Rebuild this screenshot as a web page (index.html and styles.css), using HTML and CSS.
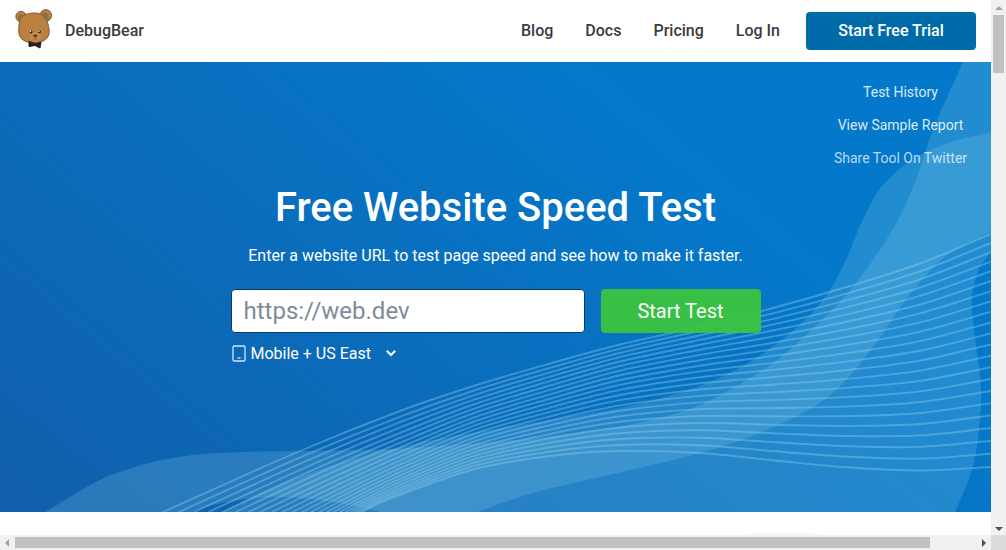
FILE: index.html
```html
<!DOCTYPE html>
<html lang="en">
<head>
<meta charset="utf-8">
<title>Free Website Speed Test</title>
<link rel="stylesheet" href="styles.css">
</head>
<body>
<div class="window">
  <div class="page">
    <header class="header">
      <a class="brand">
        <svg class="logo" viewBox="0 0 42 44" width="42" height="44">
          <g stroke="#70492a" stroke-width=".8" fill="#b98040">
            <circle cx="7" cy="8.500" r="5.200"/>
            <ellipse cx="31.800" cy="7.500" rx="5.800" ry="5.900"/>
            <path d="M7.500 9C11 5.800 16 5 20 5C25 4.900 29.500 6 31.500 10C34 14 35.200 20 35.300 24.500C35 31 28 35 20.500 35C12 35 5.500 31.500 4.800 25C4.500 19 4.800 13 7.500 9Z"/>
          </g>
          <path d="M7 11.500Q9 8 13 6.800L27 6.500Q30 8 32.500 12.500L26 18L10 19Z" fill="#b98040"/>
          <ellipse cx="6.500" cy="9" rx="2.100" ry="3" fill="#8f6d45" transform="rotate(25 6.500 9)"/>
          <ellipse cx="31.600" cy="8.300" rx="2.600" ry="3.900" fill="#8f6d45" transform="rotate(-30 31.600 8.300)"/>
          <ellipse cx="21.300" cy="28.800" rx="5.600" ry="4.200" fill="#c98f52"/>
          <circle cx="17" cy="24" r="1.500" fill="#33231b"/><circle cx="25.500" cy="23.700" r="1.500" fill="#33231b"/>
          <circle cx="16.500" cy="23.500" r=".7" fill="#fff"/><circle cx="25" cy="23.200" r=".7" fill="#fff"/>
          <path d="M18.800 27Q21.300 25.800 23.800 27Q23 29.200 21.300 29.200Q19.600 29.200 18.800 27Z" fill="#5d3a27"/>
          <path d="M21.300 29V30.500M18.500 30.800Q20 31.800 21.300 30.500Q22.600 31.800 24 30.800" fill="none" stroke="#83532b" stroke-width=".7"/>
          <path d="M15 33.500L21 35.600L27 34.200L26 40L21 37.500L15 38.500Z" fill="#251d24" stroke="#251d24" stroke-linejoin="round"/>
          <circle cx="17" cy="35.800" r=".5" fill="#8a3140"/><circle cx="24.800" cy="37" r=".5" fill="#8a3140"/>
        </svg>
        <span>DebugBear</span>
      </a>
      <nav class="nav">
        <a>Blog</a><a>Docs</a><a>Pricing</a><a>Log In</a>
        <a class="trial">Start Free Trial</a>
      </nav>
    </header>

    <main class="hero">
      <svg class="waves" viewBox="0 62 991 450" width="991" height="450">
        <g id="wave-fills"></g>
        <g id="wave-lines"></g>
      </svg>
      <div class="side-links">
        <a>Test History</a><a>View Sample Report</a><a class="dim">Share Tool On Twitter</a>
      </div>
      <section class="test">
        <h1>Free Website Speed Test</h1>
        <p>Enter a website URL to test page speed and see how to make it faster.</p>
        <div class="form">
          <input class="url" type="text" placeholder="https://web.dev">
          <button class="start">Start Test</button>
        </div>
        <div class="device">
          <svg width="14" height="17" viewBox="0 0 14 17" fill="none" stroke="#d5e6f4"><rect x="1" y="1" width="12" height="15" rx="1.200" stroke-width="1.300"/><path d="M5.500 13H8.500" stroke-width="1.300"/></svg>
          <span>Mobile + US East</span>
          <svg class="chevron" width="12" height="8" viewBox="0 0 12 8" fill="none" stroke="#fff" stroke-width="2"><path d="M1.800 1.800L6 6L10.200 1.800"/></svg>
        </div>
      </section>
    </main>
    <div class="below"><div class="blob"></div></div>
  </div>
  <div class="vbar"><i class="up"></i><div class="vthumb"></div><i class="down"></i></div>
  <div class="hbar"><i class="left"></i><div class="hthumb"></div><i class="right"></i></div>
  <div class="corner"></div>
</div>
<script src="waves.js"></script>
</body>
</html>
```
FILE: styles.css
```css
* { box-sizing: border-box; }
body { margin: 0; font-family: Roboto, "Liberation Sans", sans-serif; font-size: 16px; overflow: hidden; }
.window { display: grid; grid-template-columns: 991px 15px; grid-template-rows: 535px 15px; width: 1006px; height: 550px; }
.page { display: flex; flex-direction: column; overflow: hidden; background: #fff; }

.header { display: flex; justify-content: space-between; align-items: center; flex: none; height: 62px; padding: 0 15px 0 14px; color: #3b3b3b; font-weight: 500; }
.brand { display: flex; align-items: center; gap: 9px; }
.brand span, .nav a:not(.trial) { padding-bottom: 2px; }
.logo { display: block; margin-bottom: 2px; }
.nav { display: flex; align-items: center; gap: 32px; }
.trial { width: 170px; height: 38px; margin-left: -6px; border-radius: 4px; background: #006ba9; color: #fff; line-height: 38px; text-align: center; }

.hero { position: relative; flex: none; height: 450px; background: linear-gradient(40deg, #115fab 0%, #0479cb 74%, #0479cb 100%); color: #fff; }
.waves { position: absolute; left: 0; top: 0; }
#wave-fills path { fill: rgba(142, 208, 232, .22); }
#wave-lines path { fill: none; stroke: rgba(155, 215, 238, .36); stroke-width: 1.9; }
.side-links { position: absolute; right: 0; top: 14px; display: flex; flex-direction: column; align-items: center; width: 181px; font-size: 14px; line-height: 33px; color: rgba(255, 255, 255, .86); }
.side-links .dim { opacity: .85; }
.test { position: relative; width: 530px; margin: 0 0 0 231px; padding-top: 122px; }
h1 { margin: 0; font-size: 40px; font-weight: 500; line-height: 48px; text-align: center; white-space: nowrap; transform: translateX(-.5px); }
.test p { margin: 12px 0 0; line-height: 24px; text-align: center; transform: translateX(-.5px); }
.form { display: flex; gap: 16px; margin-top: 21px; }
.url { width: 354px; height: 44px; padding: 0 11.500px; border: 1px solid #063d68; border-radius: 4px; background: #fff; font: 24px Roboto, sans-serif; }
.url::placeholder { color: #7e8b98; opacity: 1; }
.start { width: 160px; height: 44px; padding: 0 7px 0 6px; border: 0; border-radius: 4px; background: rgba(60, 197, 60, .93); color: #fff; font: 20px Roboto, sans-serif; }
.device { display: flex; align-items: center; height: 24px; margin-top: 8px; padding-left: 1px; gap: 4.500px; }
.chevron { margin-left: 9px; }

.below { flex: 1; display: flex; align-items: flex-end; overflow: hidden; }
.blob { width: 74px; height: 3px; margin-left: 746px; border-radius: 50% 50% 0 0 / 100% 100% 0 0; background: #f5f8fc; }

.vbar, .hbar { display: flex; align-items: center; justify-content: space-between; background: #f1f1f1; }
.vbar { flex-direction: column; }
.vthumb { width: 11px; height: 58px; background: #c1c1c1; margin: 5px 0 auto; }
.hthumb { width: 915px; height: 11px; background: #c1c1c1; margin: 0 auto 0 5px; }
.vbar i, .hbar i { width: 0; height: 0; border: 4px solid transparent; }
.vbar .up { margin-top: 2px; border-bottom-color: #a3a3a3; }
.vbar .down { margin-bottom: 2px; border-top-color: #505050; }
.vbar .down { border-bottom-width: 2px; }
.hbar .left { margin-left: 1px; margin-right: 1px; border-right-color: #a3a3a3; }
.hbar .right { margin-right: 1px; border-left-color: #505050; }
.corner { background: #dcdcdc; }
```
FILE: waves.js
```javascript
// Smooth curve through a list of points (Catmull-Rom as cubic segments).
function curve(pts) {
  let d = '';
  for (let i = 0; i < pts.length - 1; i++) {
    const a = pts[Math.max(i - 1, 0)], b = pts[i], c = pts[i + 1], e = pts[Math.min(i + 2, pts.length - 1)];
    const len = (p, q) => Math.hypot(q[0] - p[0], q[1] - p[1]);
    const l = len(b, c), l0 = len(a, b) + l, l1 = l + len(c, e);
    const k0 = l / l0 / 3, k1 = l / l1 / 3;
    const c1 = [b[0] + (c[0] - a[0]) * k0, b[1] + (c[1] - a[1]) * k0];
    const c2 = [c[0] - (e[0] - b[0]) * k1, c[1] - (e[1] - b[1]) * k1];
    d += 'C' + [...c1, ...c2, ...c].map(n => n.toFixed(2)).join(' ');
  }
  return d;
}
function add(id, d) {
  const p = document.createElementNS('http://www.w3.org/2000/svg', 'path');
  p.setAttribute('d', d);
  document.getElementById(id).appendChild(p);
}

const outerTop = [[45, 512], [100, 480], [133, 467.5], [167, 459], [200, 454.5], [250, 451.8], [300, 451], [367, 450], [420, 447.5], [500, 441.5], [567, 434], [633, 424], [700, 405], [766, 368], [804, 337], [847, 294], [873, 260], [898, 220], [917, 177], [933, 130], [963, 62]];
const outerRight = [[991, 252], [979, 269], [972, 295], [973, 320], [976, 345], [981, 390], [979, 430], [972, 470], [955, 512]];
const outerHole = [[381, 512], [360, 507], [320, 500], [280, 497], [247, 499], [213, 505], [192, 512]];
add('wave-fills', 'M45 512' + curve(outerTop) + 'H991V252' + curve(outerRight) + 'H381' + curve(outerHole) + 'Z');

const innerTop = [[223, 512], [260, 493], [300, 477], [340, 463], [400, 447], [483, 431], [567, 417], [633, 405], [697, 387], [745, 365], [783, 339], [810, 315], [830, 290], [847, 258], [862, 221], [883, 185], [917, 157], [953, 141.5], [991, 132.5]];
const innerBottom = [[991, 231], [945, 257], [910, 294], [870, 351], [828, 397], [767, 430], [700, 453], [600, 477], [533, 493], [477, 512]];
add('wave-fills', 'M223 512' + curve(innerTop) + 'V231' + curve(innerBottom) + 'Z');

// Stations: top point, bottom point, spacing bias between the lines.
const stations = [
  [163, 512, 362, 512, .7], [300, 451, 380, 503, .6], [400, 411, 405, 493, .45], [475, 385.500, 475, 469, .2],
  [550, 363.500, 550, 456, 0], [620, 344.500, 620, 451, -.2], [700, 326.500, 700, 453, -.3], [775, 307.500, 775, 460.500, -.28],
  [850, 286, 850, 467.500, -.25], [920, 263.500, 920, 470.500, -.22], [991, 234, 991, 467, -.2]
];
const count = 22;
for (let i = 0; i < count; i++) {
  const t = i / (count - 1);
  const pts = stations.map(([x0, y0, x1, y1, bias]) => {
    const u = t + bias * t * (1 - t);
    return [x0 + (x1 - x0) * u, y0 + (y1 - y0) * u];
  });
  add('wave-lines', 'M' + pts[0].join(' ') + curve(pts));
}
```
